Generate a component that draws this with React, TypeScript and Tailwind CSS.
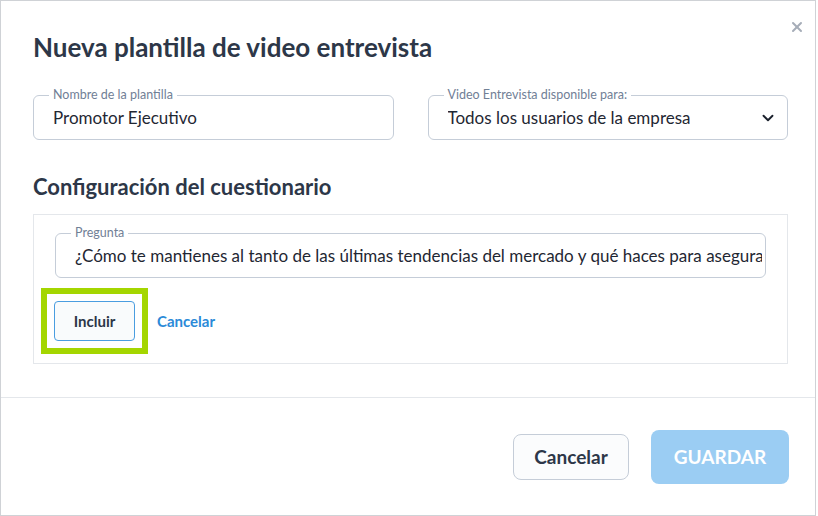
import { ChevronDown, X } from "lucide-react";

const font = { fontFamily: '"Lato", "Noto Sans", sans-serif' };

function Field({
  label,
  value,
  className,
  select,
  padRight = "pr-[19px]",
}: {
  label: string;
  value: string;
  className?: string;
  select?: boolean;
  padRight?: string;
}) {
  return (
    <div
      className={`relative flex h-[45px] items-center rounded-md border border-[#c5cdd8] pl-[19px] ${select ? "pr-[10px]" : padRight} ${className ?? ""}`}
    >
      <span className="absolute -top-[9px] left-[15px] bg-white px-[4px] text-[12.5px] leading-[16px] text-[#718096]">
        {label}
      </span>
      <span className="min-w-0 flex-1 overflow-hidden whitespace-nowrap text-[17px] text-[#1f2733]">
        {value}
      </span>
      {select && (
        <ChevronDown className="h-[18px] w-[18px] shrink-0 text-[#1a202c]" strokeWidth={2.5} />
      )}
    </div>
  );
}

export default function App() {
  return (
    <div
      style={font}
      className="relative flex h-[516px] w-[816px] flex-col border border-[#cfd2d6] bg-white"
    >
      <button type="button" className="absolute right-[10px] top-[18px] text-[#a6adb8]">
        <X className="h-[16px] w-[16px]" strokeWidth={3} />
      </button>

      <div className="pl-[32px] pr-[27px] pt-[29px]">
        <h1 className="text-[26px] font-bold leading-[34px] text-[#2d3748]">
          Nueva plantilla de video entrevista
        </h1>

        <div className="mt-[31px] grid grid-cols-2 gap-[34px]">
          <Field label="Nombre de la plantilla" value="Promotor Ejecutivo" />
          <Field
            label="Video Entrevista disponible para:"
            value="Todos los usuarios de la empresa"
            select
          />
        </div>

        <h2 className="mt-[33px] text-[22px] font-bold leading-[28px] text-[#2d3748]">
          Configuración del cuestionario
        </h2>

        <section className="mt-[13px] h-[150px] border border-[#e4e7eb] px-[21px] pt-[18px]">
          <Field
            label="Pregunta"
            value="¿Cómo te mantienes al tanto de las últimas tendencias del mercado y qué haces para asegurarte de estar actualizado?"
            padRight="pr-[3px]"
          />
          <div className="mt-[10px] flex items-center gap-[9px]">
            <div className="-ml-[14px] border-[6px] border-[#a4d600] p-[7px]">
              <button
                type="button"
                className="h-[40px] w-[81px] rounded border border-[#4a9de0] bg-[#f9fbfc] text-[15px] font-bold text-[#2d3748]"
              >
                Incluir
              </button>
            </div>
            <button type="button" className="text-[15px] font-bold text-[#2b8ad8]">
              Cancelar
            </button>
          </div>
        </section>
      </div>

      <div className="mt-[33px] border-t border-[#e4e7eb]" />

      <div className="flex items-center justify-end gap-[22px] pr-[26px] pt-[32px]">
        <button
          type="button"
          className="h-[46px] w-[116px] rounded-lg border border-[#c5cdd8] bg-[#fbfcfd] text-[19px] font-bold text-[#2d3748]"
        >
          Cancelar
        </button>
        <button
          type="button"
          className="h-[54px] w-[138px] rounded-lg bg-[#9bcdf3] text-[19px] font-bold text-white"
        >
          GUARDAR
        </button>
      </div>
    </div>
  );
}
